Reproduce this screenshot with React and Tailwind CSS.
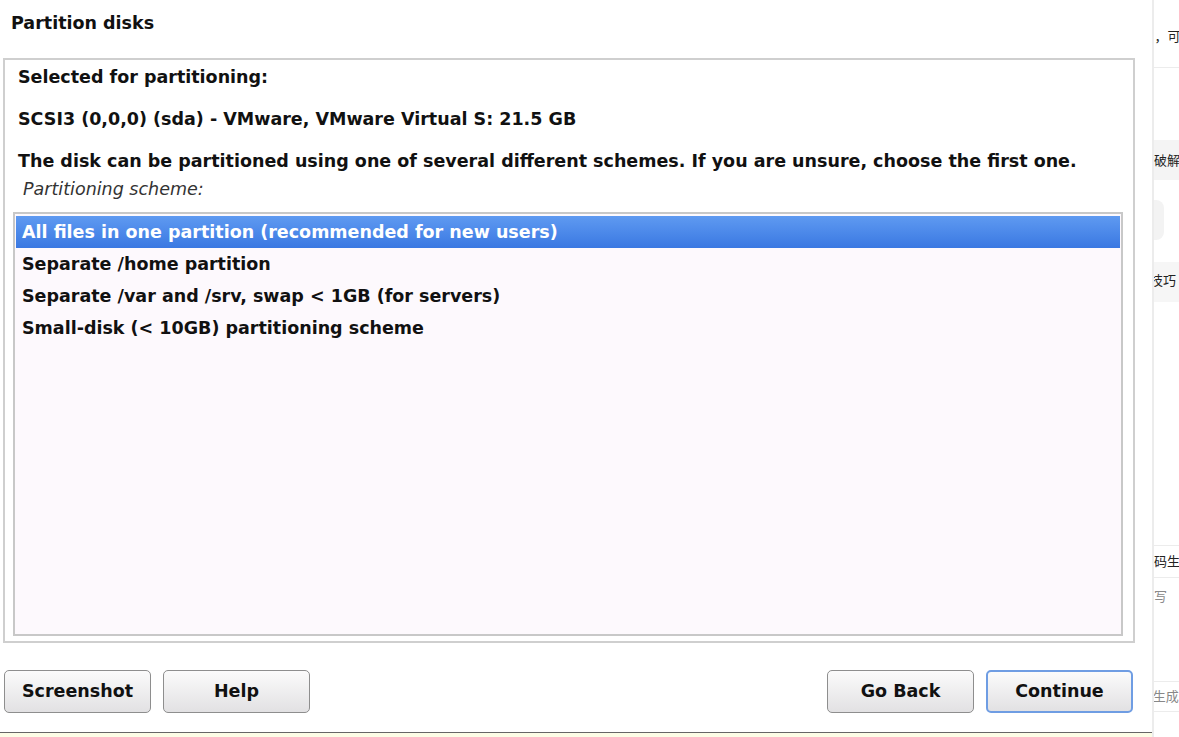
const schemes = [
  "All files in one partition (recommended for new users)",
  "Separate /home partition",
  "Separate /var and /srv, swap < 1GB (for servers)",
  "Small-disk (< 10GB) partitioning scheme",
];

function Button({ label, primary }) {
  return (
    <button
      className={
        "h-[43px] w-[147px] rounded-[5px] bg-gradient-to-b from-[#fbfbfb] to-[#e2e1e3] text-[17.5px] font-bold text-[#111] " +
        (primary ? "border-2 border-[#6f9de3]" : "border border-[#8e8e8e]")
      }
    >
      {label}
    </button>
  );
}

function SideStrip() {
  return (
    <div className="flex h-full w-[27px] flex-col overflow-hidden border-l-2 border-[#ececec] bg-white text-[13px] text-[#222] whitespace-nowrap" style={{ fontFamily: '"Noto Sans CJK SC", sans-serif' }}>
      <div className="h-[68px] border-b border-[#ececec] pt-[26px] -ml-[6px]">：，可</div>
      <div className="h-[72px]"></div>
      <div className="h-[40px] bg-[#f4f4f4] pt-[10px]">破解</div>
      <div className="mt-[20px] h-[40px] w-[10px] rounded-r-[8px] bg-[#f3f3f3]"></div>
      <div className="mt-[22px] h-[40px] bg-[#f6f6f6] pt-[8px] -ml-[4px]">技巧</div>
      <div className="h-[243px]"></div>
      <div className="h-[33px] border-y border-[#ececec] pt-[5px]">码生</div>
      <div className="h-[104px] border-b border-[#ececec] pt-[8px] text-[#888]">写</div>
      <div className="h-[30px] border-b border-[#ececec] pt-[4px] -ml-[5px] text-[#888]">I生成</div>
    </div>
  );
}

export default function App() {
  return (
    <div className="flex h-[737px] w-[1179px] overflow-hidden bg-white" style={{ fontFamily: '"DejaVu Sans", sans-serif' }}>
      <div className="flex w-[1152px] flex-col">
        <div className="flex h-[58px] items-start pl-[11px] pt-[10px] text-[17.5px] font-bold text-[#111]">Partition disks</div>

        <div className="ml-[3px] flex h-[585px] w-[1132px] flex-col border-2 border-[#cfcfcf] bg-white pl-[13px] text-[17.5px] font-bold text-[#111]">
          <div className="flex h-[34px] items-center">Selected for partitioning:</div>
          <div className="flex h-[50px] items-center">SCSI3 (0,0,0) (sda) - VMware, VMware Virtual S: 21.5 GB</div>
          <div className="flex h-[34px] items-center whitespace-nowrap">The disk can be partitioned using one of several different schemes. If you are unsure, choose the first one.</div>
          <div className="flex h-[22px] items-center pl-[5px] font-normal italic text-[#333]">Partitioning scheme:</div>
          <div className="-ml-[5px] mr-[10px] mt-[12px] mb-[5px] flex-1 border-2 border-[#c8c8c8] bg-[#fdf9fd] px-[1px] pt-[2px]">
            {schemes.map((s, i) => (
              <div
                key={s}
                className={
                  "flex h-[32px] items-center pl-[6px] " +
                  (i === 0 ? "bg-gradient-to-b from-[#5f9af1] to-[#3a78e2] text-white" : "text-[#111]")
                }
              >
                {s}
              </div>
            ))}
          </div>
        </div>

        <div className="mt-[27px] flex h-[43px] px-[4px]">
          <div className="flex gap-[12px]">
            <Button label="Screenshot" />
            <Button label="Help" />
          </div>
          <div className="ml-auto mr-[15px] flex gap-[12px]">
            <Button label="Go Back" />
            <Button label="Continue" primary />
          </div>
        </div>

        <div className="mt-[19px] h-[5px] border-t border-[#666] bg-[#fdfde6]"></div>
      </div>
      <SideStrip />
    </div>
  );
}
